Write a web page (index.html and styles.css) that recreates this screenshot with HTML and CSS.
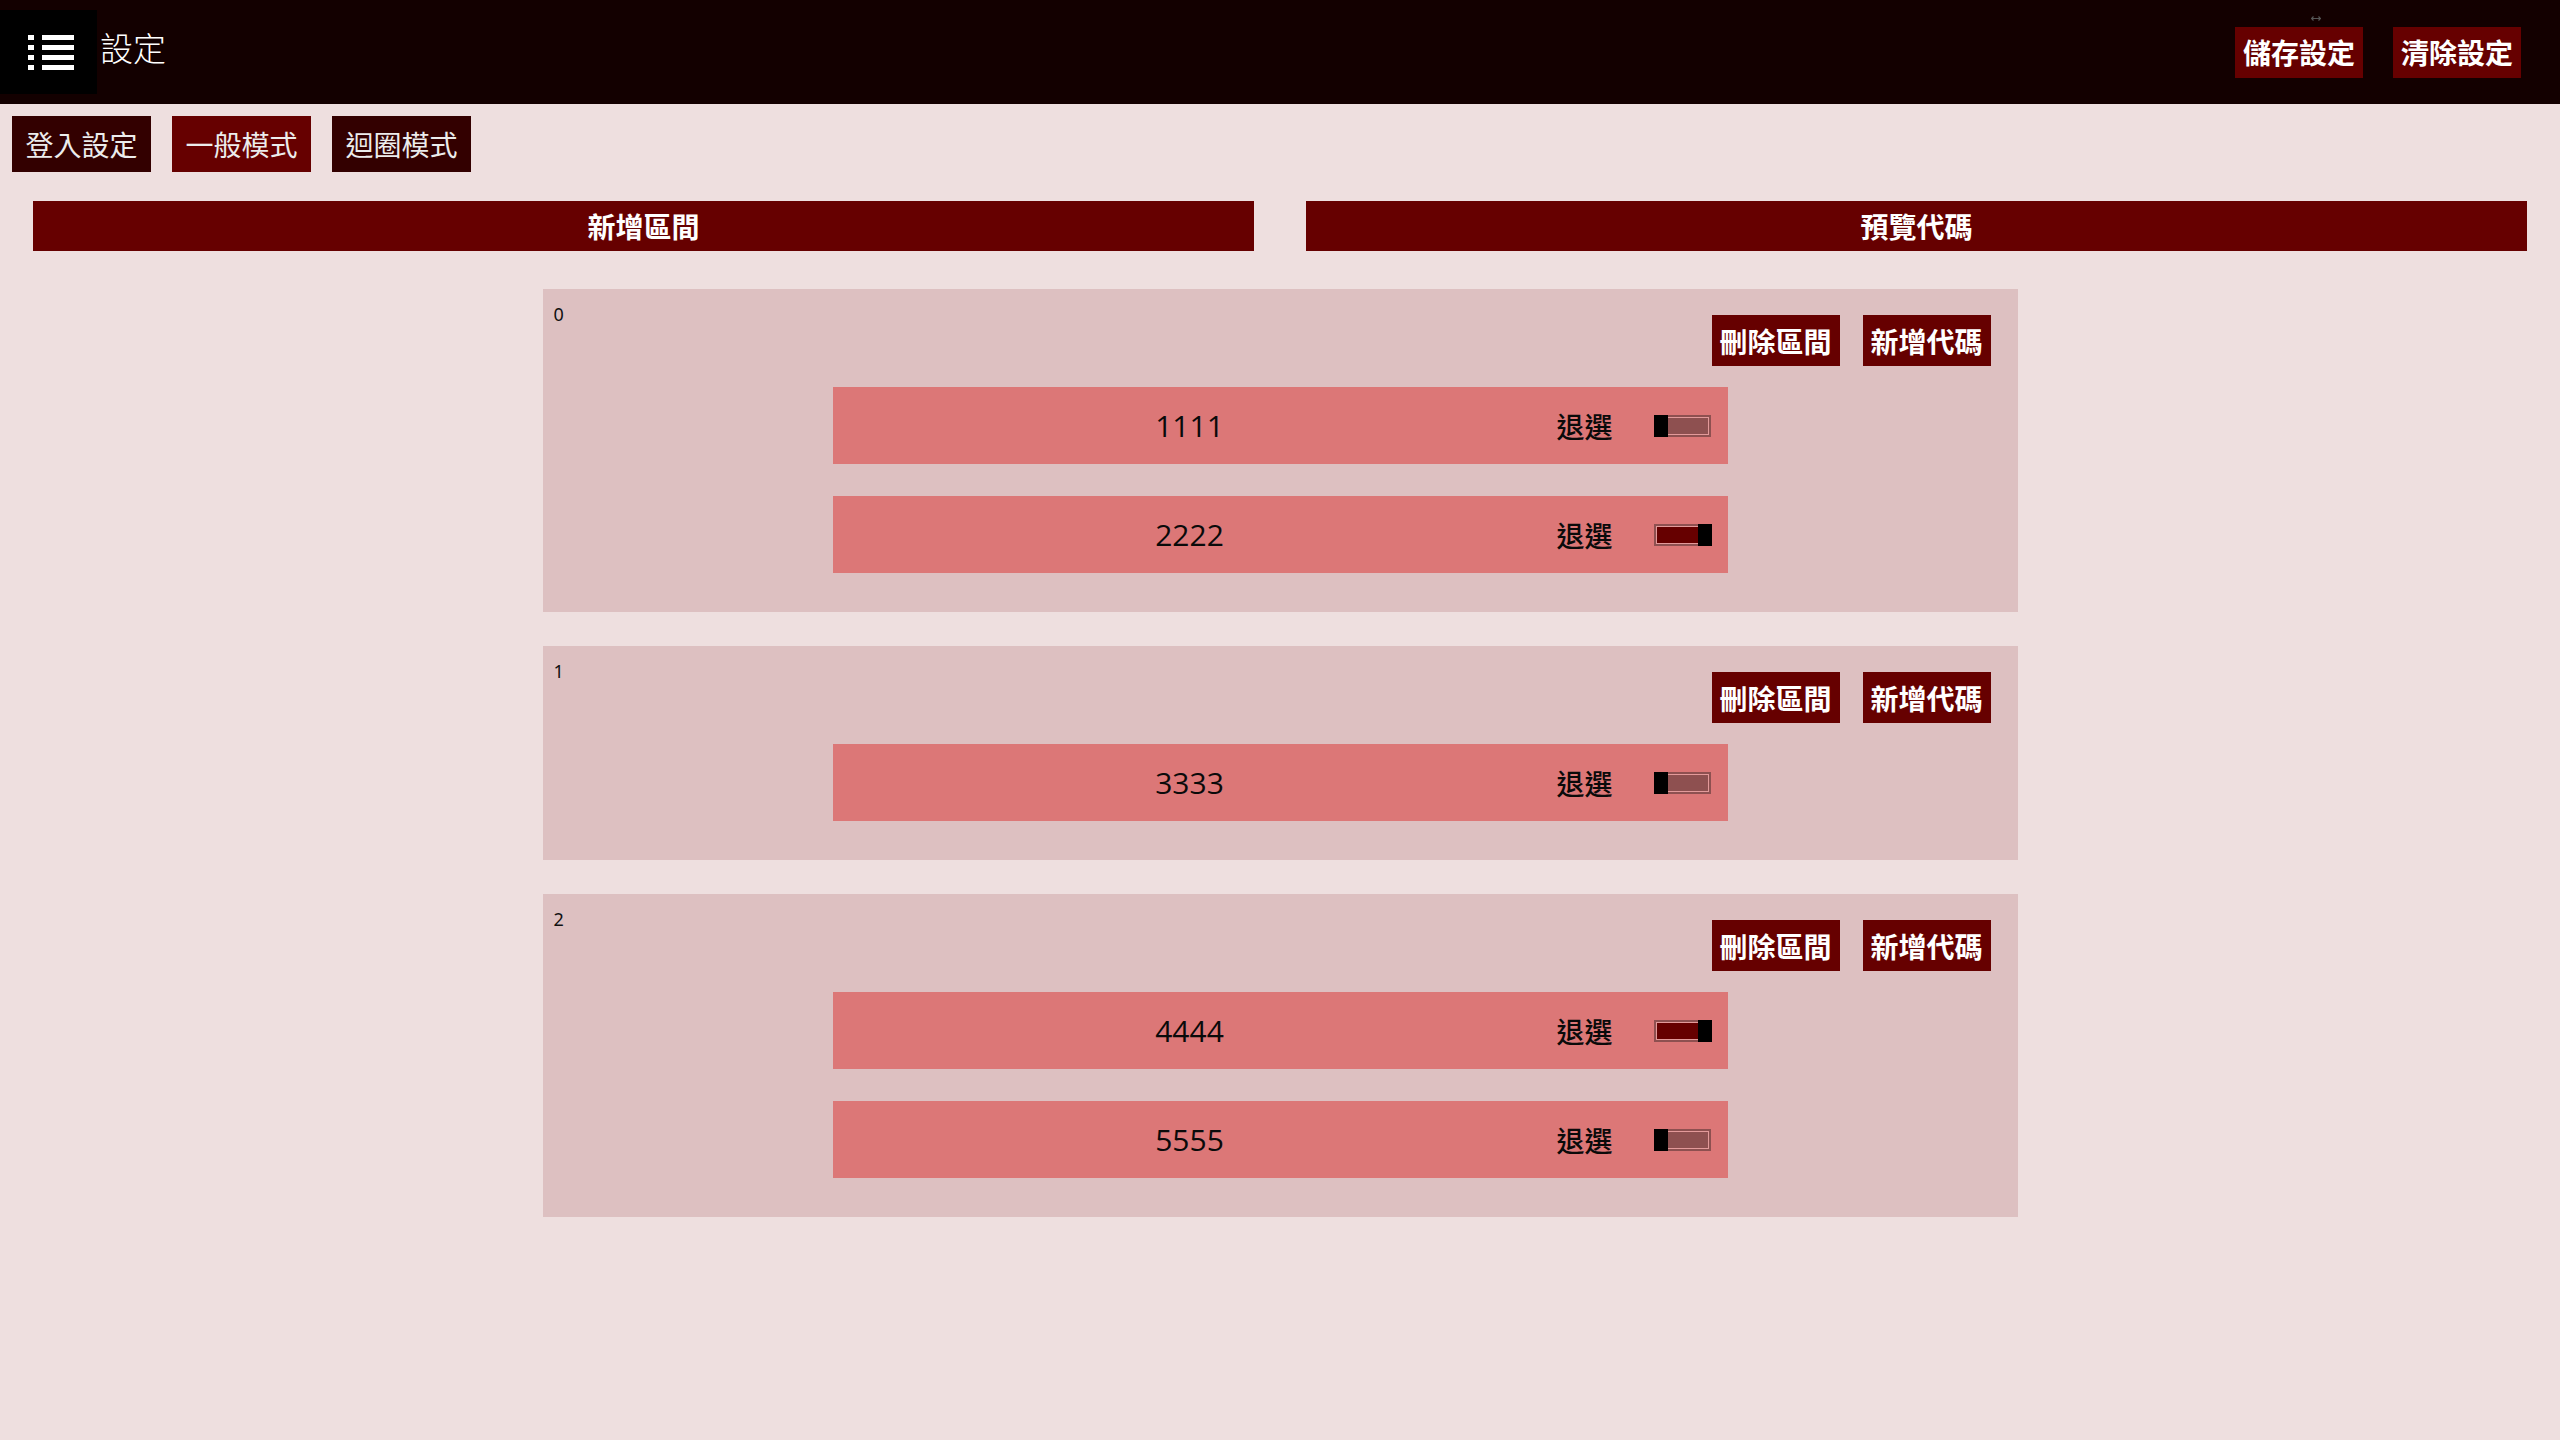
FILE: index.html
```html
<!DOCTYPE html>
<html lang="zh-Hant">
<head>
<meta charset="utf-8">
<title>設定</title>
<link rel="stylesheet" href="styles.css">
</head>
<body>
<header class="topbar">
  <div class="menu-btn">
    <svg width="46" height="35" viewBox="0 0 46 35" fill="#fff">
      <rect x="0" y="0" width="6" height="5"/>
      <rect x="14" y="0" width="32" height="5"/>
      <rect x="0" y="10" width="6" height="5"/>
      <rect x="14" y="10" width="32" height="5"/>
      <rect x="0" y="20" width="6" height="5"/>
      <rect x="14" y="20" width="32" height="5"/>
      <rect x="0" y="30" width="6" height="5"/>
      <rect x="14" y="30" width="32" height="5"/>
    </svg>
  </div>
  <div class="title">設定</div>
  <div class="top-actions">
    <button class="btn">儲存設定</button>
    <button class="btn">清除設定</button>
  </div>
  <svg class="grip" width="10" height="5" viewBox="0 0 10 5" fill="none" stroke="#555" stroke-width="1.2">
    <path d="M0.5 2.5H9.5M2.5 0.5L0.5 2.5L2.5 4.5M7.5 0.5L9.5 2.5L7.5 4.5"/>
  </svg>
</header>

<nav class="tabs">
  <button class="tab">登入設定</button>
  <button class="tab active">一般模式</button>
  <button class="tab">迴圈模式</button>
</nav>

<div class="sections">
  <div class="section-head">新增區間</div>
  <div class="section-head">預覽代碼</div>
</div>

<main class="groups">
  <section class="group">
    <div class="group-head">
      <span class="group-index">0</span>
      <div class="group-actions">
        <button class="btn">刪除區間</button>
        <button class="btn">新增代碼</button>
      </div>
    </div>
    <div class="rows">
      <div class="row">
        <span class="code">1111</span>
        <span class="opt">退選</span>
        <span class="toggle"><span class="track"></span><span class="thumb"></span></span>
      </div>
      <div class="row">
        <span class="code">2222</span>
        <span class="opt">退選</span>
        <span class="toggle on"><span class="track"></span><span class="thumb"></span></span>
      </div>
    </div>
  </section>

  <section class="group">
    <div class="group-head">
      <span class="group-index">1</span>
      <div class="group-actions">
        <button class="btn">刪除區間</button>
        <button class="btn">新增代碼</button>
      </div>
    </div>
    <div class="rows">
      <div class="row">
        <span class="code">3333</span>
        <span class="opt">退選</span>
        <span class="toggle"><span class="track"></span><span class="thumb"></span></span>
      </div>
    </div>
  </section>

  <section class="group">
    <div class="group-head">
      <span class="group-index">2</span>
      <div class="group-actions">
        <button class="btn">刪除區間</button>
        <button class="btn">新增代碼</button>
      </div>
    </div>
    <div class="rows">
      <div class="row">
        <span class="code">4444</span>
        <span class="opt">退選</span>
        <span class="toggle on"><span class="track"></span><span class="thumb"></span></span>
      </div>
      <div class="row">
        <span class="code">5555</span>
        <span class="opt">退選</span>
        <span class="toggle"><span class="track"></span><span class="thumb"></span></span>
      </div>
    </div>
  </section>
</main>
</body>
</html>
```

FILE: styles.css
```css
html, body {
  margin: 0;
  padding: 0;
}

body {
  background: #eedfdf;
  font-family: "Noto Sans CJK TC", "Noto Sans", sans-serif;
  min-height: 1440px;
}

button {
  font-family: inherit;
  border: none;
  margin: 0;
  padding: 0;
  cursor: pointer;
}

.topbar {
  position: relative;
  height: 104px;
  background: #130000;
  display: flex;
  align-items: center;
}

.menu-btn {
  width: 97px;
  height: 84px;
  background: #000;
  display: flex;
  align-items: center;
  justify-content: center;
}

.menu-btn svg {
  display: block;
  margin-left: 4px;
}

.title {
  color: #fff;
  font-size: 33px;
  line-height: 1;
  margin-left: 3px;
  margin-bottom: 10px;
  font-weight: 300;
}

.top-actions {
  margin-left: auto;
  margin-right: 39px;
  display: flex;
  gap: 30px;
}

.btn {
  width: 128px;
  height: 51px;
  background: #660000;
  color: #fff;
  font-size: 28px;
  font-weight: 700;
  line-height: 1;
  display: flex;
  align-items: center;
  justify-content: center;
}

.grip {
  position: absolute;
  left: 2311px;
  top: 16px;
}

.tabs {
  display: flex;
  gap: 21px;
  padding: 12px 12px 0;
}

.tab {
  width: 139px;
  height: 56px;
  background: #330000;
  color: #ececec;
  font-size: 28px;
  font-weight: 400;
  line-height: 1;
  display: flex;
  align-items: center;
  justify-content: center;
}

.tab.active {
  background: #660000;
}

.sections {
  display: flex;
  gap: 52px;
  padding: 0 33px;
  margin-top: 29px;
}

.section-head {
  flex: 1;
  height: 50px;
  background: #660000;
  color: #fff;
  font-size: 28px;
  font-weight: 700;
  line-height: 1;
  display: flex;
  align-items: center;
  justify-content: center;
}

.groups {
  display: flex;
  flex-direction: column;
  align-items: center;
  gap: 34px;
  margin-top: 38px;
}

.group {
  width: 1475px;
  box-sizing: border-box;
  background: #ddc0c1;
  padding: 13px 27px 39px 11px;
}

.group-head {
  display: flex;
  justify-content: space-between;
  align-items: flex-start;
}

.group-index {
  font-family: "Noto Sans", sans-serif;
  font-size: 18px;
  line-height: 22px;
  color: #111;
  margin-top: 1px;
}

.group-actions {
  display: flex;
  gap: 23px;
  margin-top: 13px;
}

.rows {
  display: flex;
  flex-direction: column;
  align-items: center;
  gap: 32px;
  margin: 21px -27px 0 -11px;
}

.row {
  width: 895px;
  height: 77px;
  box-sizing: border-box;
  background: #dc7777;
  display: flex;
  align-items: center;
  padding-right: 17px;
}

.code {
  flex: 1;
  text-align: center;
  font-family: "Open Sans", "Noto Sans", sans-serif;
  font-size: 30px;
  line-height: 1;
  color: #0a0a0a;
}

.opt {
  margin-left: 10px;
  font-size: 28px;
  line-height: 1;
  font-weight: 500;
  color: #0a0a0a;
}

.toggle {
  position: relative;
  margin-left: 41px;
  width: 57px;
  height: 22px;
  box-sizing: border-box;
  padding: 2px;
  background: #8e5050;
}

.toggle .track {
  display: block;
  height: 100%;
  box-sizing: border-box;
  border: 1px solid #e39a9a;
  background: #8e5050;
}

.toggle.on .track {
  background: #660000;
}

.toggle .thumb {
  position: absolute;
  top: 0;
  left: 0;
  width: 14px;
  height: 22px;
  background: #000;
}

.toggle.on .thumb {
  left: auto;
  right: -1px;
}
```
